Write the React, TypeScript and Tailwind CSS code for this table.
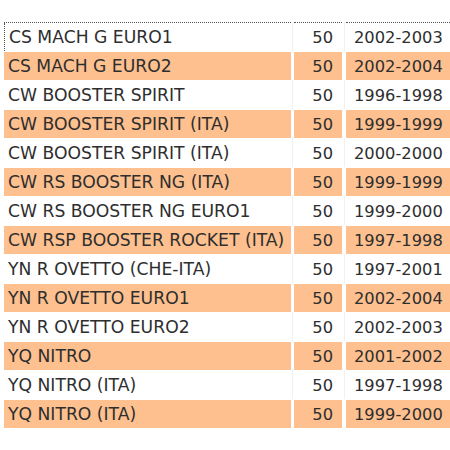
import React from "react";

const rows: [string, string, string][] = [
  ["CS MACH G EURO1", "50", "2002-2003"],
  ["CS MACH G EURO2", "50", "2002-2004"],
  ["CW BOOSTER SPIRIT", "50", "1996-1998"],
  ["CW BOOSTER SPIRIT (ITA)", "50", "1999-1999"],
  ["CW BOOSTER SPIRIT (ITA)", "50", "2000-2000"],
  ["CW RS BOOSTER NG (ITA)", "50", "1999-1999"],
  ["CW RS BOOSTER NG EURO1", "50", "1999-2000"],
  ["CW RSP BOOSTER ROCKET (ITA)", "50", "1997-1998"],
  ["YN R OVETTO (CHE-ITA)", "50", "1997-2001"],
  ["YN R OVETTO EURO1", "50", "2002-2004"],
  ["YN R OVETTO EURO2", "50", "2002-2003"],
  ["YQ NITRO", "50", "2001-2002"],
  ["YQ NITRO (ITA)", "50", "1997-1998"],
  ["YQ NITRO (ITA)", "50", "1999-2000"],
];

export default function App() {
  return (
    <div className="relative w-[450px] h-[450px] bg-white overflow-hidden pt-[22px] pl-[4px] text-[#2e2e2e] leading-none" style={{ fontFamily: '"DejaVu Sans", Verdana, sans-serif' }}>
      <div className="flex flex-col w-[460px]">
        {rows.map((r, i) => {
          const odd = i % 2 === 1;
          const bg = odd ? "bg-[#fdc08e]" : "bg-white";
          const first = i === 0;
          return (
            <div key={i} className="flex h-[29px]">
              <div className={`w-[287px] h-[28px] mt-[1px] flex items-center pl-[4px] pt-[2px] whitespace-nowrap text-[17.2px] ${bg} ${first ? "border-l border-dotted border-[#555]" : ""}`}>
                {r[0]}
              </div>
              <div className="w-[3px] flex justify-center">
                <div className={`w-px h-full ${odd ? "bg-white" : "bg-[#eef1f6]"}`} />
              </div>
              <div className={`w-[48px] h-[28px] mt-[1px] flex items-center justify-end pr-[9px] pt-[2px] text-[16.3px] ${bg}`}>
                {r[1]}
              </div>
              <div className="w-[4px] flex justify-center">
                <div className={`w-px h-full ${odd ? "bg-white" : "bg-[#eef1f6]"}`} />
              </div>
              <div className={`w-[110px] h-[28px] mt-[1px] flex items-center pl-[8px] pt-[2px] whitespace-nowrap text-[16.3px] ${bg}`}>
                {r[2]}
              </div>
            </div>
          );
        })}
      </div>
      <div className="absolute top-[22px] left-[4px] w-[287px] border-t border-dotted border-[#555]" />
      <div className="absolute top-[22px] left-[294px] w-[48px] border-t border-dotted border-[#555]" />
      <div className="absolute top-[22px] left-[346px] w-[104px] border-t border-dotted border-[#555]" />
    </div>
  );
}
